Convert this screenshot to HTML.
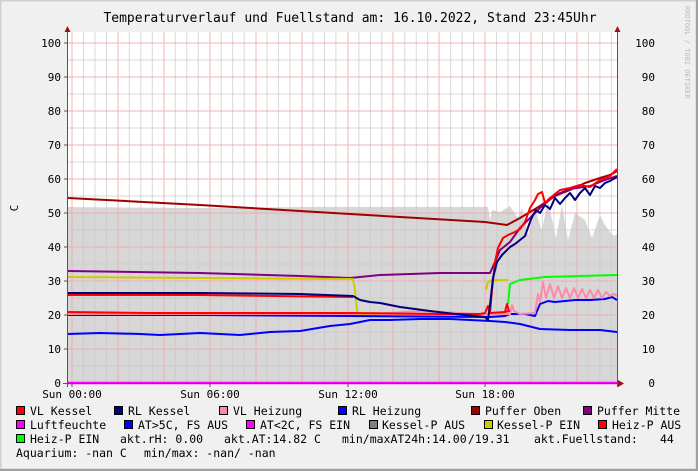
<!DOCTYPE html>
<html><head><meta charset="utf-8"><style>
html,body{margin:0;padding:0;}
body{width:698px;height:471px;overflow:hidden;background:#f0f0f0;}
svg{display:block;}
text{font-family:"DejaVu Sans Mono","Liberation Mono",monospace;}
</style></head><body>
<svg width="698" height="471" xmlns="http://www.w3.org/2000/svg">
<rect x="0" y="0" width="698" height="471" fill="#f0f0f0"/>
<rect x="0.5" y="0.5" width="696" height="469" fill="none" stroke="#cfcfcf" stroke-width="2"/>
<line x1="697" y1="0" x2="697" y2="471" stroke="#a0a0a0" stroke-width="2"/>
<line x1="0" y1="470" x2="698" y2="470" stroke="#a0a0a0" stroke-width="2"/>
<rect x="68" y="32" width="549" height="351" fill="#ffffff"/>
<polygon fill="#d7d7d7" points="68,383 68,207 200,208 300,207 400,207 470,207 488,207 490,220 492,210 500,212 510,206 518,218 522,208 528,235 535,210 542,230 548,200 556,238 562,205 568,240 575,213 585,220 592,238 600,215 605,225 610,232 614,236 617,234 617,383"/>
<g stroke-width="1">
<g stroke="#c8c8c8" opacity="0.7">
<line x1="68" x2="617" y1="366" y2="366"/><line x1="68" x2="617" y1="332" y2="332"/><line x1="68" x2="617" y1="298" y2="298"/><line x1="68" x2="617" y1="264" y2="264"/><line x1="68" x2="617" y1="230" y2="230"/><line x1="68" x2="617" y1="196" y2="196"/><line x1="68" x2="617" y1="162" y2="162"/><line x1="68" x2="617" y1="128" y2="128"/><line x1="68" x2="617" y1="94" y2="94"/><line x1="68" x2="617" y1="60" y2="60"/>
</g>
<g id="vminor" stroke="#c8c8c8" opacity="0.7"></g>
<g stroke="#f2a8a8" opacity="0.85">
<line x1="68" x2="617" y1="349" y2="349"/><line x1="68" x2="617" y1="315" y2="315"/><line x1="68" x2="617" y1="281" y2="281"/><line x1="68" x2="617" y1="247" y2="247"/><line x1="68" x2="617" y1="213" y2="213"/><line x1="68" x2="617" y1="179" y2="179"/><line x1="68" x2="617" y1="145" y2="145"/><line x1="68" x2="617" y1="111" y2="111"/><line x1="68" x2="617" y1="77" y2="77"/><line x1="68" x2="617" y1="43" y2="43"/>
<line y1="32" y2="383" x1="72" x2="72"/><line y1="32" y2="383" x1="118" x2="118"/><line y1="32" y2="383" x1="164" x2="164"/><line y1="32" y2="383" x1="210" x2="210"/><line y1="32" y2="383" x1="256" x2="256"/><line y1="32" y2="383" x1="302" x2="302"/><line y1="32" y2="383" x1="348" x2="348"/><line y1="32" y2="383" x1="393" x2="393"/><line y1="32" y2="383" x1="439" x2="439"/><line y1="32" y2="383" x1="485" x2="485"/><line y1="32" y2="383" x1="531" x2="531"/><line y1="32" y2="383" x1="577" x2="577"/>
</g>
</g>
<g fill="none" stroke-width="2" stroke-linejoin="round">
<polyline stroke="#0000ff" points="68,334 100,333 140,334 160,335 200,333 240,335 270,332 300,331 330,326 350,324 370,320 390,320 420,319 450,319 470,320 490,321 505,322 520,324 540,329 570,330 600,330 617,332"/>
<polyline stroke="#0000ff" points="68,315 200,315 350,316 490,317 505,316 510,314 525,314 535,316 540,304 548,301 555,302 565,301 575,300 590,300 605,299 612,297 617,300"/>
<polyline stroke="#ff88aa" points="68,314 350,314 390,313 420,311 480,314 510,314 512,305 514,311 520,314 535,313 538,294 540,302 543,282 546,298 550,284 554,298 558,286 562,298 566,288 570,298 574,288 578,298 582,289 586,298 590,290 594,298 598,290 602,298 606,292 610,296 614,294 617,296"/>
<polyline stroke="#a00000" points="68,198 200,205 350,214 485,222 507,225 520,218 540,206 555,196 570,190 585,183 600,178 610,175 617,171"/>
<polyline stroke="#800080" points="68,271 200,273 300,276 350,278 380,275 440,273 490,273 495,262 500,250 510,242 520,228 530,218 540,208 555,195 570,189 590,186 605,180 617,176"/>
<polyline stroke="#cccc00" points="68,277 200,278 353,279 355,290 357,311 360,314 380,313"/>
<polyline stroke="#cccc00" points="486,290 488,282 492,280 505,280 508,280"/>
<polyline stroke="#00ff00" points="508,304 510,284 520,280 545,277 580,276 617,275"/>
<polyline stroke="#ff0000" points="68,312 150,313 250,313 350,313 440,314 480,314 485,313 488,306 490,313 505,312 507,304 509,311 505,312 490,313 492,290 495,262 498,248 503,238 508,235 515,232 520,229 525,222 530,208 535,200 538,194 542,192 545,203 550,198 560,190 570,188 580,185 590,187 600,180 610,176 617,169"/>
<polyline stroke="#ff0000" points="68,295 200,295 353,297"/>
<polyline stroke="#000080" points="68,293 200,293 300,294 353,296 360,300 370,302 380,303 400,307 430,311 455,314 485,317 488,320 490,305 493,278 497,262 502,255 510,247 515,244 520,240 525,236 530,222 533,215 536,210 540,213 545,205 550,209 555,198 560,204 565,198 570,193 575,200 580,193 585,188 590,195 595,186 600,188 605,183 610,181 617,177"/>
<line x1="68" y1="383" x2="617" y2="383" stroke="#ff00ff" stroke-width="2.5"/>
</g>
<line x1="67.5" y1="30" x2="67.5" y2="387" stroke="#555" stroke-width="1"/>
<line x1="617.5" y1="30" x2="617.5" y2="387" stroke="#555" stroke-width="1"/>
<line x1="63" y1="383.5" x2="620" y2="383.5" stroke="#555" stroke-width="1"/>
<polygon points="64.5,32 70.5,32 67.5,26" fill="#a01010"/>
<polygon points="614.5,32 620.5,32 617.5,26" fill="#a01010"/>
<polygon points="618,380 618,387 624,383.5" fill="#a01010"/>
<g stroke="#555"><line x1="64" x2="68" y1="43" y2="43"/><line x1="64" x2="68" y1="77" y2="77"/><line x1="64" x2="68" y1="111" y2="111"/><line x1="64" x2="68" y1="145" y2="145"/><line x1="64" x2="68" y1="179" y2="179"/><line x1="64" x2="68" y1="213" y2="213"/><line x1="64" x2="68" y1="247" y2="247"/><line x1="64" x2="68" y1="281" y2="281"/><line x1="64" x2="68" y1="315" y2="315"/><line x1="64" x2="68" y1="349" y2="349"/>
<line x1="72" x2="72" y1="383" y2="387"/><line x1="210" x2="210" y1="383" y2="387"/><line x1="348" x2="348" y1="383" y2="387"/><line x1="485" x2="485" y1="383" y2="387"/></g>
<text x="350" y="22" font-size="13" text-anchor="middle" fill="#000">Temperaturverlauf und Fuellstand am: 16.10.2022, Stand 23:45Uhr</text>
<g font-size="11" fill="#000" text-anchor="end">
<text x="61" y="47">100</text><text x="61" y="81">90</text><text x="61" y="115">80</text><text x="61" y="149">70</text><text x="61" y="183">60</text><text x="61" y="217">50</text><text x="61" y="251">40</text><text x="61" y="285">30</text><text x="61" y="319">20</text><text x="61" y="353">10</text><text x="61" y="387">0</text>
<text x="655" y="47">100</text><text x="655" y="81">90</text><text x="655" y="115">80</text><text x="655" y="149">70</text><text x="655" y="183">60</text><text x="655" y="217">50</text><text x="655" y="251">40</text><text x="655" y="285">30</text><text x="655" y="319">20</text><text x="655" y="353">10</text><text x="655" y="387">0</text>
</g>
<text x="18" y="208" font-size="11" transform="rotate(-90 18 208)" text-anchor="middle">C</text>
<g font-size="11" text-anchor="middle"><text x="72" y="398">Sun 00:00</text><text x="210" y="398">Sun 06:00</text><text x="348" y="398">Sun 12:00</text><text x="485" y="398">Sun 18:00</text></g>
<text x="685" y="6" font-size="7" fill="#bbb" transform="rotate(90 685 6)">RRDTOOL / TOBI OETIKER</text>
<g stroke="#000" stroke-width="1">
<rect x="16.5" y="406.5" width="8" height="8" fill="#ff0000"/><rect x="114.5" y="406.5" width="8" height="8" fill="#000080"/><rect x="219.5" y="406.5" width="8" height="8" fill="#ff88aa"/><rect x="338.5" y="406.5" width="8" height="8" fill="#0000ff"/><rect x="471.5" y="406.5" width="8" height="8" fill="#a00000"/><rect x="583.5" y="406.5" width="8" height="8" fill="#800080"/>
<rect x="16.5" y="420.5" width="8" height="8" fill="#ff00ff"/><rect x="124.5" y="420.5" width="8" height="8" fill="#0000ff"/><rect x="246.5" y="420.5" width="8" height="8" fill="#ff00ff"/><rect x="369.5" y="420.5" width="8" height="8" fill="#808080"/><rect x="484.5" y="420.5" width="8" height="8" fill="#cccc00"/><rect x="598.5" y="420.5" width="8" height="8" fill="#ff0000"/>
<rect x="16.5" y="434.5" width="8" height="8" fill="#00ff00"/>
</g>
<g font-size="11.5" fill="#000">
<text x="30" y="415">VL Kessel</text><text x="128" y="415">RL Kessel</text><text x="233" y="415">VL Heizung</text><text x="352" y="415">RL Heizung</text><text x="485" y="415">Puffer Oben</text><text x="597" y="415">Puffer Mitte</text>
<text x="30" y="429">Luftfeuchte</text><text x="138" y="429">AT&gt;5C, FS AUS</text><text x="260" y="429">AT&lt;2C, FS EIN</text><text x="382" y="429">Kessel-P AUS</text><text x="497" y="429">Kessel-P EIN</text><text x="612" y="429">Heiz-P AUS</text>
<text x="30" y="443">Heiz-P EIN</text><text x="120" y="443">akt.rH: 0.00</text><text x="224" y="443">akt.AT:14.82 C</text><text x="342" y="443">min/maxAT24h:14.00</text><text x="468" y="443">/19.31</text><text x="534" y="443">akt.Fuellstand:</text><text x="660" y="443">44</text>
<text x="16" y="457">Aquarium: -nan C</text><text x="144" y="457">min/max: -nan/ -nan</text>
</g>
</svg>
<script>
var g=document.getElementById('vminor');var s='';
for(var i=0;i<48;i++){var x=72+i*11.475;if(i%4==0)continue;if(x>617)break;s+='<line x1="'+x+'" x2="'+x+'" y1="32" y2="383"/>';}
g.innerHTML=s;
</script>
</body></html>
